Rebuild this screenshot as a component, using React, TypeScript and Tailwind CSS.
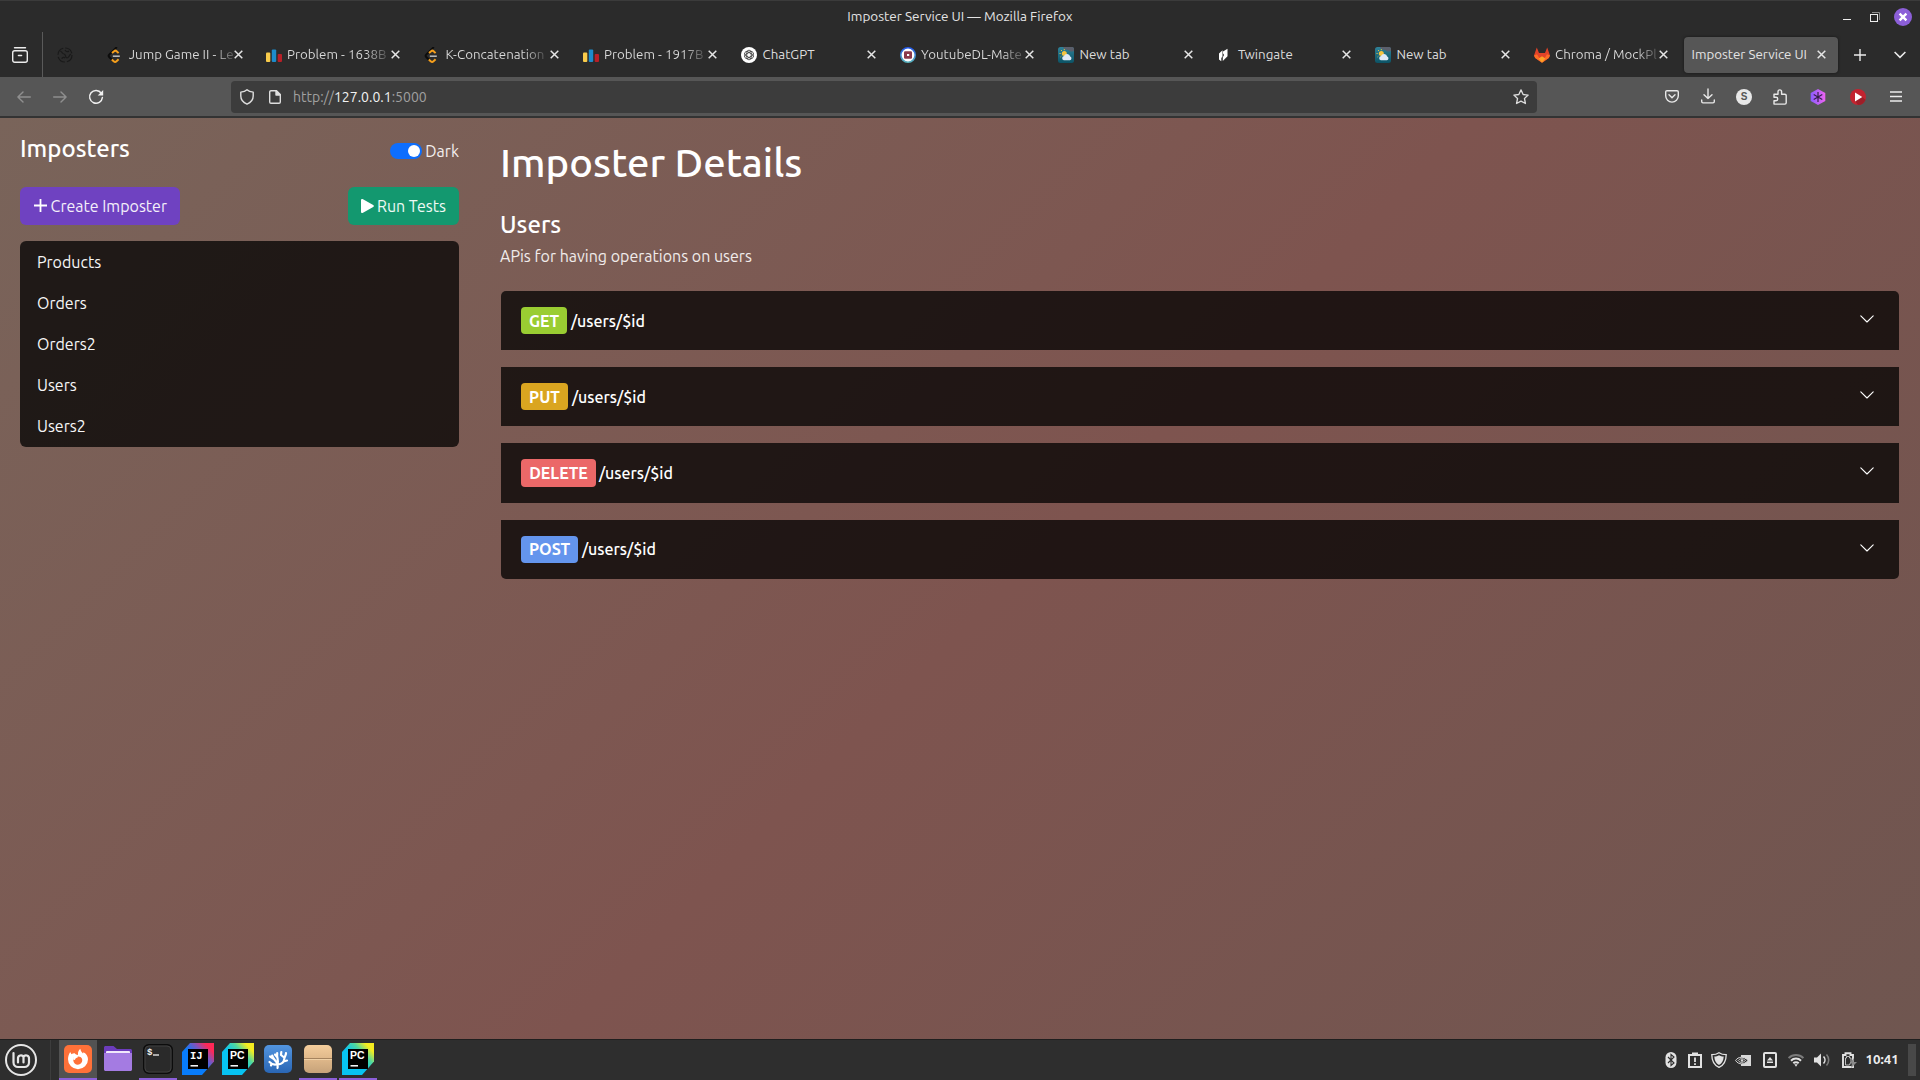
import React from 'react';

type Kids = { children?: React.ReactNode };

/* ---------- tab favicons ---------- */

const LeetCode = () => (
  <svg width="16" height="16" viewBox="0 0 16 16" fill="none" strokeWidth="2" strokeLinecap="butt" strokeLinejoin="round">
    <path d="M9.300.6 2.200 7.600c-.7.8-.7 1.700 0 2.400L5 12.700" stroke="#0c0c0c" strokeLinecap="round" />
    <path d="M5 6 7.100 4.200c.8-.7 1.700-.7 2.500 0l2 1.900" stroke="#f59f1c" />
    <path d="M4.800 12.500l1.900 1.800c.8.700 2 .7 2.800 0l2.100-2" stroke="#f59f1c" />
    <path d="M5.800 9.200h7" stroke="#b8b8b8" strokeWidth="1.600" />
  </svg>
);

const Codeforces = () => (
  <svg width="16" height="16" viewBox="0 0 16 16">
    <rect x="0" y="5.5" width="4.3" height="9.5" rx="1" fill="#f8cb4b" />
    <rect x="5.8" y="2.5" width="4.4" height="12.5" rx="1" fill="#1c8bcb" />
    <rect x="11.7" y="7" width="4.3" height="8" rx="1" fill="#b81f27" />
  </svg>
);

const ChatGPT = () => (
  <svg width="16" height="16" viewBox="0 0 16 16" fill="none">
    <circle cx="8" cy="8" r="8" fill="#fff" />
    <g stroke="#333" strokeWidth="0.8">
      <rect x="5.800" y="3.200" width="4.400" height="9.600" rx="2.200" />
      <rect x="5.800" y="3.200" width="4.400" height="9.600" rx="2.200" transform="rotate(60 8 8)" />
      <rect x="5.800" y="3.200" width="4.400" height="9.600" rx="2.200" transform="rotate(120 8 8)" />
    </g>
  </svg>
);

const YoutubeDL = () => (
  <svg width="16" height="16" viewBox="0 0 16 16">
    <defs>
      <linearGradient id="ytRing" x1="0" y1="0" x2="0" y2="1">
        <stop offset="0" stopColor="#2458e8" />
        <stop offset="1" stopColor="#58b3bd" />
      </linearGradient>
    </defs>
    <circle cx="8" cy="8" r="7.2" fill="#fff" stroke="url(#ytRing)" strokeWidth="1.6" />
    <rect x="4" y="4.2" width="8" height="7.6" rx="1.2" fill="#8c3a4c" />
    <rect x="7" y="7" width="2.2" height="2" fill="#fff" />
  </svg>
);

const Weather = () => (
  <svg width="16" height="16" viewBox="0 0 16 16">
    <defs>
      <linearGradient id="sky" x1="0" y1="0" x2="0" y2="1">
        <stop offset="0" stopColor="#2f8299" />
        <stop offset="1" stopColor="#0c5365" />
      </linearGradient>
    </defs>
    <rect width="16" height="16" rx="2.5" fill="url(#sky)" />
    <path d="M5 0h9a2 2 0 0 1 2 2v2c-3 1-4 .5-5-.5S6 3 5 0z" fill="#5b5f6b" />
    <circle cx="6.3" cy="6.600" r="2.500" fill="#f5c440" />
    <path d="M1.500 6.500h1.200M3 3l1 1M2.500 10l.8-.7M6.300 2v1.200" stroke="#f5c440" strokeWidth="0.9" />
    <path d="M5.800 13.300a2.200 2.200 0 0 1 .2-4.300 3.300 3.300 0 0 1 6.200.5 2 2 0 0 1-.3 3.800z" fill="#dfe9f7" />
  </svg>
);

const Twingate = () => (
  <svg width="16" height="16" viewBox="0 0 16 16" fill="#fff">
    <path d="M2 6.500 5.500 3.200v6.300L4.300 11v3.300L2 12.500z" />
    <path d="M6 4.500 10.500 1.800v7.500L5.800 14V10l1-1.200V6.500L6 7.300z" />
  </svg>
);

const GitLab = () => (
  <svg width="16" height="16" viewBox="0 0 16 16">
    <path d="M2.800.5 5 6h6L13.200.5 16 8.500 14.800 11 8 15.700 1.200 11 0 8.500z" fill="#e24329" />
    <path d="M0 8.500 3 7.200 8 15.700 1.200 11zM16 8.500 13 7.200 8 15.700 14.800 11z" fill="#fc6d26" />
    <path d="M4.700 11.500 8 9.300l3.300 2.200L8 15.700z" fill="#fca326" />
  </svg>
);

const CloseX = () => (
  <svg width="9" height="9" viewBox="0 0 9 9" className="shrink-0" stroke="#e6e6e6" strokeWidth="1.500">
    <path d="M.7.7l7.600 7.600M8.300.7.7 8.300" />
  </svg>
);

const fade = 'bg-linear-to-r from-[#dcdcdc] from-80% to-[#555] bg-clip-text text-transparent';

const tabs: { icon: React.ReactNode; label: string; cls: string }[] = [
  { icon: <LeetCode />, label: 'Jump Game II - Le', cls: fade },
  { icon: <Codeforces />, label: 'Problem - 1638B', cls: fade },
  { icon: <LeetCode />, label: 'K-Concatenation', cls: fade },
  { icon: <Codeforces />, label: 'Problem - 1917B', cls: fade },
  { icon: <ChatGPT />, label: 'ChatGPT', cls: '' },
  { icon: <YoutubeDL />, label: 'YoutubeDL-Mate', cls: fade },
  { icon: <Weather />, label: 'New tab', cls: '' },
  { icon: <Twingate />, label: 'Twingate', cls: '' },
  { icon: <Weather />, label: 'New tab', cls: '' },
  { icon: <GitLab />, label: 'Chroma / MockPl', cls: fade },
];

function TitleBar() {
  return (
    <div className="grid h-8 grid-cols-[1fr_auto_1fr] items-center border-t border-[#3b3b3b]">
      <span />
      <span className="text-[13.5px] leading-none text-[#e4e4e4]">Imposter Service UI — Mozilla Firefox</span>
      <div className="flex items-center justify-end pr-2">
        <svg width="8" height="12" viewBox="0 0 8 12" className="mr-[19px]">
          <path d="M0 8.500h8" stroke="#eee" />
        </svg>
        <svg width="10" height="10" viewBox="0 0 10 10" fill="none" className="mr-[14px]">
          <path d="M2 .5h7.500V8" stroke="#8e8e8e" />
          <rect x=".5" y="2.500" width="7" height="7" stroke="#eee" />
        </svg>
        <svg width="18" height="18" viewBox="0 0 18 18">
          <circle cx="9" cy="9" r="9" fill="#8c5fd8" />
          <path d="M5.600 5.600l6.800 6.800M12.400 5.600l-6.800 6.800" stroke="#fff" strokeWidth="2.400" />
        </svg>
      </div>
    </div>
  );
}

function TabStrip() {
  return (
    <div className="flex h-[45px] items-center text-[13.33px] text-[#dcdcdc]">
      <div className="flex h-full w-[43px] items-center border-r border-[#5a5a5a] pl-3">
        <svg width="16" height="16" viewBox="0 0 16 16" fill="none" stroke="#ececec" strokeWidth="1.400" strokeLinecap="round">
          <path d="M2.500.8h11" />
          <rect x=".7" y="3.700" width="14.600" height="11.600" rx="2" />
          <path d="M6.500 8.500h3" strokeWidth="1.600" />
        </svg>
      </div>
      <div className="flex w-[56px] items-center pl-[14px]">
        <svg width="16" height="16" viewBox="0 0 16 16" fill="none" stroke="#1a1a1a" strokeWidth="1.200">
          <circle cx="8" cy="8" r="7" strokeDasharray="9 2" />
          <path d="M3 4c2 0 2 3 4 3s1 4 3 4 2-3 4-4M8 3c1 2 3 2 4 1M5 12c0-2 2-2 3-1" />
        </svg>
      </div>
      {tabs.map((t, i) => (
        <div key={i} className="flex h-9 w-[158.5px] shrink-0 items-center pr-[16px] pl-[8px]">
          <span className="mr-[5.500px] shrink-0">{t.icon}</span>
          <span className={`whitespace-nowrap ${t.cls}`}>{t.label}</span>
          <span className="ml-auto">
            <CloseX />
          </span>
        </div>
      ))}
      <div className="flex h-9 w-[154px] shrink-0 items-center rounded bg-[#565656] pr-[12px] pl-[7.500px] text-[#e4e4e4] shadow-[0_0_3px_rgba(0,0,0,0.5)]">
        <span className="flex-1 whitespace-nowrap">Imposter Service UI</span>
        <CloseX />
      </div>
      <svg width="12" height="12" viewBox="0 0 12 12" className="ml-4" stroke="#ececec" strokeWidth="1.400">
        <path d="M6 0v12M0 6h12" />
      </svg>
      <svg width="12" height="8" viewBox="0 0 12 8" className="ml-[28px]" fill="none" stroke="#ececec" strokeWidth="1.500">
        <path d="M.6 1 6 6.400 11.400 1" />
      </svg>
    </div>
  );
}

const Cell = ({ children }: Kids) => <span className="flex w-9 items-center justify-center">{children}</span>;
const WideCell = ({ children }: Kids) => <span className="flex w-10 items-center justify-center">{children}</span>;

function NavBar() {
  return (
    <div className="flex h-[41px] items-center border-b-2 border-[#333] bg-[#565656] pl-1.5">
      <Cell>
        <svg width="14" height="12" viewBox="0 0 14 12" fill="none" stroke="#8f8f8f" strokeWidth="1.400" strokeLinecap="round" strokeLinejoin="round">
          <path d="M13.300 6H.9M6 .9.900 6 6 11.100" />
        </svg>
      </Cell>
      <Cell>
        <svg width="14" height="12" viewBox="0 0 14 12" fill="none" stroke="#8f8f8f" strokeWidth="1.400" strokeLinecap="round" strokeLinejoin="round">
          <path d="M.7 6h12.400M8 .9 13.100 6 8 11.100" />
        </svg>
      </Cell>
      <Cell>
        <svg width="16" height="16" viewBox="0 0 16 16" fill="none" stroke="#f0f0f0" strokeWidth="1.500" strokeLinecap="round">
          <path d="M13.300 4.200A6.400 6.400 0 1 0 14.400 8.500" />
          <path d="M15.200 1v5.500H9.700z" fill="#f0f0f0" stroke="none" />
        </svg>
      </Cell>
      <div className="ml-[117px] flex h-8 w-[1306px] items-center rounded bg-[#3c3c3c] pr-[8px] pl-[9px]">
        <svg width="14" height="16" viewBox="0 0 14 16" fill="none" stroke="#dedede" strokeWidth="1.400" strokeLinejoin="round">
          <path d="M7 .8C5.500 2.300 3 3 .8 3.100v4C.8 11 3.500 13.800 7 15.200c3.500-1.400 6.200-4.200 6.200-8.100v-4C11 3 8.500 2.300 7 .8z" />
        </svg>
        <svg width="12" height="14" viewBox="0 0 12 14" className="ml-[15px]" fill="none" stroke="#dedede" strokeWidth="1.400" strokeLinejoin="round">
          <path d="M2 .7h5.500l3.800 3.800V12a1.300 1.300 0 0 1-1.300 1.300H2A1.300 1.300 0 0 1 .7 12V2A1.300 1.300 0 0 1 2 .7z" />
          <path d="M7 .8V5h4.200z" fill="#dedede" />
        </svg>
        <span className="ml-3 text-sm text-[#a0a0a0]">
          http://<span className="text-[#f2f2f2]">127.0.0.1</span>:5000
        </span>
        <svg width="16" height="16" viewBox="0 0 16 16" className="ml-auto" fill="none" stroke="#dedede" strokeWidth="1.300" strokeLinejoin="round">
          <path d="M8 .9l2.150 4.600 5 .6-3.700 3.400 1 5L8 12.100l-4.450 2.400 1-5L.85 6.100l5-.6z" />
        </svg>
      </div>
      <div className="ml-auto flex pr-1.5">
        <Cell>
          <svg width="14" height="13" viewBox="0 0 14 13" fill="none" stroke="#e8e8e8" strokeWidth="1.400" strokeLinecap="round" strokeLinejoin="round">
            <path d="M2 .7h10A1.300 1.300 0 0 1 13.300 2v3.800a6.300 6.300 0 0 1-12.600 0V2A1.300 1.300 0 0 1 2 .7z" />
            <path d="M4 4.800l3 2.900 3-2.900" />
          </svg>
        </Cell>
        <Cell>
          <svg width="14" height="16" viewBox="0 0 14 16" className="-mt-px -ml-px" fill="none" stroke="#e8e8e8" strokeWidth="1.400" strokeLinecap="round" strokeLinejoin="round">
            <path d="M7 1v9.500M3 6.700l4 3.900 4-3.900M.7 12v1.600a1.300 1.300 0 0 0 1.300 1.300h10a1.300 1.300 0 0 0 1.300-1.300V12" />
          </svg>
        </Cell>
        <Cell>
          <span className="flex size-4 items-center justify-center rounded-full bg-[#e8e8e8] font-['Liberation_Sans'] text-[10px] leading-none font-bold text-[#555]">
            S
          </span>
        </Cell>
        <Cell>
          <svg width="14" height="16" viewBox="0 0 14 16" fill="none" stroke="#e8e8e8" strokeWidth="1.400" strokeLinejoin="round">
            <path d="M1 8.300V5.200h4V2.700a1.800 1.800 0 0 1 3.600 0v2.500h3.300a1.300 1.300 0 0 1 1.300 1.300v7.300a1.300 1.300 0 0 1-1.300 1.300H1v-3.300h2a1.700 1.700 0 0 0 0-3.500z" />
          </svg>
        </Cell>
        <WideCell>
          <svg width="16" height="16" viewBox="0 0 16 16">
            <defs>
              <linearGradient id="hex" x1="0" y1="0" x2="1" y2="0">
                <stop offset="0" stopColor="#8a5cff" />
                <stop offset="1" stopColor="#ee63f0" />
              </linearGradient>
            </defs>
            <path d="M8 0l7.300 4v8L8 16 .7 12V4z" fill="url(#hex)" />
            <path d="M8 3v10M3.700 5.500l8.600 5M12.300 5.500l-8.600 5" stroke="#34204a" strokeWidth="1.200" />
          </svg>
        </WideCell>
        <WideCell>
          <svg width="16" height="16" viewBox="0 0 16 16">
            <circle cx="8" cy="8" r="8" fill="#c32430" />
            <path d="M8 16a8 8 0 0 0 7.500-5.200L11 7 5 12z" fill="#9e1e28" />
            <path d="M5 3.600 12.300 8 5 12.400z" fill="#fff" />
          </svg>
        </WideCell>
        <Cell>
          <svg width="12" height="11" viewBox="0 0 12 11" stroke="#ececec" strokeWidth="1.300">
            <path d="M0 1h12M0 5.500h12M0 10h12" />
          </svg>
        </Cell>
      </div>
    </div>
  );
}

/* ---------- page ---------- */

const imposters = ['Products', 'Orders', 'Orders2', 'Users', 'Users2'];

const endpoints = [
  { method: 'GET', box: 'h-[27px] w-[46px] bg-[#9acd32]', row: 'h-[59px] rounded-t-[5px]', path: 'leading-[29px]' },
  { method: 'PUT', box: 'h-[27px] w-[47px] bg-[#daa520]', row: 'h-[59px]', path: 'leading-[29px]' },
  { method: 'DELETE', box: 'h-[28px] w-[75px] -mr-px bg-[#eb6868]', row: 'h-[60px]', path: 'leading-[29px]' },
  { method: 'POST', box: 'h-[27px] w-[57px] bg-[#6495ed] pb-px', row: 'h-[59px] rounded-b-[5px]', path: 'leading-[27px]' },
];

function Sidebar() {
  return (
    <aside className="w-[439px] shrink-0">
      <div className="flex h-[69px] items-start justify-between">
        <h4 className="mt-4 text-2xl leading-[29px] font-medium text-white">Imposters</h4>
        <label className="mt-[21px] flex items-center gap-[3.500px] text-base leading-6 text-[#f4efee]">
          <span className="flex h-4 w-8 items-center justify-end rounded-full bg-[#0d6efd] pr-0.5">
            <span className="size-3 rounded-full bg-white" />
          </span>
          Dark
        </label>
      </div>
      <div className="flex justify-between">
        <button className="flex h-[38px] w-40 items-center justify-end rounded-md bg-[#6f42c1] pr-[13px] text-base whitespace-nowrap text-[#f4f0fa]">
          <svg width="13" height="13" viewBox="0 0 13 13" className="mr-1 mb-0.5 shrink-0" stroke="#fff" strokeWidth="1.800">
            <path d="M6.500 0v13M0 6.500h13" />
          </svg>
          Create Imposter
        </button>
        <button className="flex h-[38px] w-[111px] items-center justify-end rounded-md bg-[#13986f] pr-[13px] text-base whitespace-nowrap text-[#eefaf5]">
          <svg width="13" height="14" viewBox="0 0 13 14" className="mr-[3px] shrink-0" fill="#fff">
            <path d="M0 1.300C0 .2 1 -.3 2 .3l10.200 5.800c.9.500.9 1.300 0 1.800L2 13.700c-1 .6-2 .1-2-1z" />
          </svg>
          Run Tests
        </button>
      </div>
      <ul className="mt-4 overflow-hidden rounded-md bg-black/74">
        {imposters.map((n) => (
          <li key={n} className="h-[41px] px-[17px] text-base leading-[42px] text-[#f6f6f6] last:h-[42px]">
            {n}
          </li>
        ))}
      </ul>
    </aside>
  );
}

function Details() {
  return (
    <main className="ml-[41px] w-[1399px]">
      <h1 className="mt-[21px] text-[40px] leading-[48px] font-medium text-white">Imposter Details</h1>
      <h4 className="mt-[23px] text-2xl leading-[29px] font-medium text-white">Users</h4>
      <p className="mt-[5px] text-base leading-6 text-[#f1eceb]">APis for having operations on users</p>
      <div className="mt-[23px] ml-px flex flex-col gap-[17px]">
        {endpoints.map((e) => (
          <div key={e.method} className={`flex items-start bg-black/74 pt-4 pr-[25px] pl-5 ${e.row}`}>
            <span className={`flex items-center justify-center rounded text-base leading-none font-bold text-white ${e.box}`}>
              {e.method}
            </span>
            <span className={`ml-1 text-base font-medium text-white ${e.path}`}>/users/$id</span>
            <svg width="14" height="8" viewBox="0 0 14 8" className="mt-2 ml-auto" fill="none" stroke="#fff" strokeWidth="1.100" strokeLinecap="round" strokeLinejoin="round">
              <path d="M.8.8 7 7 13.200.8" />
            </svg>
          </div>
        ))}
      </div>
    </main>
  );
}

/* ---------- taskbar ---------- */

const JetBrains = ({ id, text, font, a, b, c }: { id: string; text: string; font: string; a: string; b: string; c: string }) => (
  <svg width="32" height="32" viewBox="0 0 32 32">
    <defs>
      <linearGradient id={id} x1="0.15" y1="0.75" x2="0.9" y2="0.05">
        <stop offset="0.35" stopColor={a} />
        <stop offset="0.65" stopColor={b} />
        <stop offset="0.9" stopColor={c} />
      </linearGradient>
    </defs>
    <path d="M8 0h24v18.500L20 32H0V9z" fill={`url(#${id})`} />
    <rect x="6" y="6" width="20" height="20" fill="#000" />
    <text x="8" y="16" fill="#fff" fontFamily={font} fontWeight="700" fontSize="10.500">
      {text}
    </text>
    <path d="M8.500 22.800h7.500" stroke="#fff" strokeWidth="1.500" />
  </svg>
);

const mono = "'Liberation Mono', monospace";
const sans = "'Liberation Sans', sans-serif";

const FirefoxIcon = () => (
  <svg width="28" height="28" viewBox="0 0 28 28">
    <rect width="28" height="28" rx="5" fill="#ff7139" />
    <path d="M14 24.300A10 10 0 0 1 4 14.300c0-3 1-5.300 2.200-7.300l1.300 2.300c1-.9 2-1.200 3.200-1.100.8 1.300 1.900 1.500 3.300 1.700-.3-2.600.5-4.700 2.300-6.200.3 2.300 1.500 3.300 2.700 4.800l.5-1.200c2.900 1.600 4.500 4.100 4.500 7a10 10 0 0 1-10 10z" fill="#fff" />
    <path d="M10 11.600c1.600.4 2.400-.4 4-.1 1.700-.1 4.300 1 4.300 3.600a4.500 4.500 0 0 1-9 .2c-.1-1.400.2-2.600.7-3.700z" fill="#ff7139" />
    <path d="M9.500 10.500c2 0 3.500-.3 4.500 1.200-.4 1.100-1.600 1-2.400 1.700-.4.400-.6 1-.6 1.500l-2-.5z" fill="#fff" />
  </svg>
);

const FolderIcon = () => (
  <svg width="28" height="26" viewBox="0 0 28 26">
    <path d="M0 1.500C0 .7.700 0 1.500 0h8l3.500 3h13.500c.8 0 1.500.7 1.500 1.500V10H0z" fill="#6c3cbc" />
    <rect x="2" y="5" width="24" height="4" rx="1" fill="#f0e8fb" />
    <path d="M0 7h28v16.500c0 .8-.7 1.500-1.500 1.500h-25C.7 25 0 24.300 0 23.500z" fill="#a47be2" />
  </svg>
);

const TerminalIcon = () => (
  <svg width="30" height="30" viewBox="0 0 30 30">
    <rect x=".7" y=".7" width="28.600" height="28.600" rx="5" fill="#2a2a2a" stroke="#0c0c0c" strokeWidth="1.400" />
    <rect x="2" y="2" width="26" height="26" rx="4" fill="none" stroke="#454545" strokeWidth=".8" />
    <text x="4" y="10.500" fill="#f2f2f2" fontFamily={mono} fontSize="9" fontWeight="700">$</text>
    <path d="M10 11h6" stroke="#f2f2f2" strokeWidth="1.300" />
  </svg>
);

const CoralIcon = () => (
  <svg width="28" height="28" viewBox="0 0 28 28">
    <defs>
      <linearGradient id="coral" x1="0" y1="0" x2="0" y2="1">
        <stop offset="0" stopColor="#5295e0" />
        <stop offset="1" stopColor="#2a66b4" />
      </linearGradient>
    </defs>
    <rect width="28" height="28" rx="5" fill="url(#coral)" />
    <g fill="none" stroke="#fff" strokeWidth="2.200" strokeLinecap="round" strokeLinejoin="round">
      <path d="M13.500 23c.5-1.500 0-2.500-.3-3.800C10.500 20 7.500 19 5.500 17M13.200 19c-.5-3-4-4-5-8.500M9.200 13.500 6 11.500M13.500 18.500c1.500-2.500-1-6-.3-10.500M13 12l-2-2.500M14 19.500c4-.5 6-2 6.200-5.500.2-2.500 2-4 1.800-6M20.200 12.500 17 10l.3-3M19.500 16.500l3.500-1M7.500 18.500 7 20.500" />
    </g>
  </svg>
);

const BoxIcon = () => (
  <svg width="28" height="28" viewBox="0 0 28 28">
    <defs>
      <linearGradient id="box" x1="0" y1="0" x2="0" y2="1">
        <stop offset="0" stopColor="#f3cd9c" />
        <stop offset="0.5" stopColor="#dfb88a" />
        <stop offset="1" stopColor="#c6a27a" />
      </linearGradient>
    </defs>
    <rect width="28" height="28" rx="5" fill="url(#box)" />
    <path d="M0 13.500h28" stroke="#a5835e" />
    <path d="M0 14.500h28" stroke="#efd0a6" />
  </svg>
);

const launchers: { icon: React.ReactNode; cls: string }[] = [
  { icon: <FirefoxIcon />, cls: 'bg-[#525252] border-[#8c5fd8]' },
  { icon: <FolderIcon />, cls: 'border-transparent' },
  { icon: <TerminalIcon />, cls: 'border-[#8c5fd8]' },
  { icon: <JetBrains id="ij" text="IJ" font={mono} a="#087cfa" b="#7b55c0" c="#fe2857" />, cls: 'border-transparent' },
  { icon: <JetBrains id="pc1" text="PC" font={sans} a="#07c3f2" b="#4fd8a0" c="#f5ec20" />, cls: 'border-transparent' },
  { icon: <CoralIcon />, cls: 'border-transparent' },
  { icon: <BoxIcon />, cls: 'border-[#8c5fd8]' },
  { icon: <JetBrains id="pc2" text="PC" font={sans} a="#07c3f2" b="#4fd8a0" c="#f5ec20" />, cls: 'border-[#8c5fd8]' },
];

const TrayCell = ({ children }: Kids) => <span className="flex w-[26px] items-center justify-center">{children}</span>;
const TrayCellNarrow = ({ children }: Kids) => <span className="flex w-6 items-center justify-center">{children}</span>;

function Taskbar() {
  return (
    <footer className="flex h-[41px] border-t border-[#1f1f1f] bg-[#2e2e2e]">
      <div className="flex w-[51px] items-center border-r border-[#3d3d3d] pl-[5px]">
        <svg width="32" height="32" viewBox="0 0 32 32" fill="none" stroke="#e6e6e6">
          <circle cx="16" cy="16" r="15" strokeWidth="2" />
          <path d="M8.500 9v9.500a4.500 4.500 0 0 0 4.500 4.500h6.500a4.500 4.500 0 0 0 4.500-4.500v-4a2.900 2.900 0 0 0-5.500-1.500 2.900 2.900 0 0 0-5.500 1.500v4M18.500 13.500v5" strokeWidth="2.200" strokeLinecap="round" />
        </svg>
      </div>
      <div className="ml-2 flex gap-0.5">
        {launchers.map((l, i) => (
          <span key={i} className={`flex h-10 w-[38px] items-center justify-center border-b-2 ${l.cls}`}>
            {l.icon}
          </span>
        ))}
      </div>
      <div className="ml-auto flex items-center">
        <TrayCellNarrow>
          <svg width="12" height="16" viewBox="0 0 12 16">
            <rect x=".5" width="11" height="16" rx="5.500" fill="#e2e2e2" />
            <path d="M3 5l6 6-3 2.500v-11L9 5l-6 6" fill="none" stroke="#2e2e2e" strokeWidth="1.100" />
          </svg>
        </TrayCellNarrow>
        <TrayCellNarrow>
          <svg width="14" height="16" viewBox="0 0 14 16" fill="none">
            <rect x="1" y="3" width="12" height="12" stroke="#e2e2e2" strokeWidth="2" />
            <path d="M4 .5h6v3.500H4z" fill="#e2e2e2" />
            <path d="M7 5.500v4.500M7 11.300v1.700" stroke="#e2e2e2" strokeWidth="1.800" />
          </svg>
        </TrayCellNarrow>
        <TrayCellNarrow>
          <svg width="16" height="16" viewBox="0 0 16 16" fill="none">
            <path d="M8 .7c2 1.400 4.500 2 7.200 2 0 6-2 10.300-7.200 12.700C2.800 13 .8 8.700.8 2.700c2.700 0 5.200-.6 7.200-2z" stroke="#e2e2e2" strokeWidth="1.300" />
            <path d="M8 3.300c1.300.8 3 1.200 4.700 1.300-.2 3.900-1.500 6.700-4.700 8.500-3.200-1.800-4.500-4.600-4.700-8.500 1.700-.1 3.400-.5 4.700-1.300z" fill="#e2e2e2" />
          </svg>
        </TrayCellNarrow>
        <TrayCell>
          <svg width="16" height="11" viewBox="0 0 16 11" className="-ml-0.5" fill="none">
            <path d="M6 0h10v11H6z" fill="#d8d8d8" />
            <path d="M.6 5.500C3 1.500 9 .8 13 5.500 9.500 10 3.500 10 .6 5.500z" fill="#2e2e2e" stroke="#d8d8d8" />
            <path d="M3.200 5.500C5 3.200 8 3 10.500 5.500 8 8 5 8 3.200 5.500z" stroke="#d8d8d8" />
            <circle cx="7" cy="5.500" r="1.200" fill="#d8d8d8" />
          </svg>
        </TrayCell>
        <TrayCell>
          <svg width="14" height="16" viewBox="0 0 14 16">
            <rect x="1" y="1" width="12" height="14" rx="1" fill="none" stroke="#e2e2e2" strokeWidth="2" />
            <path d="M4 8.500 7 5l3 3.500zM4 9.500h6V11H4z" fill="#e2e2e2" />
          </svg>
        </TrayCell>
        <TrayCell>
          <svg width="16" height="14" viewBox="0 0 16 14" fill="none" strokeWidth="2">
            <path d="M.6 5a10.500 10.500 0 0 1 14.800 0" stroke="#7b7b7b" />
            <path d="M3 7.700a7 7 0 0 1 10 0M5.300 10.300a3.800 3.800 0 0 1 5.400 0" stroke="#e2e2e2" />
            <path d="M6.300 11.300h3.400L8 13.800z" fill="#e2e2e2" />
          </svg>
        </TrayCell>
        <TrayCell>
          <svg width="16" height="14" viewBox="0 0 16 14" fill="none">
            <path d="M0 4.500h3L7 .5v13l-4-4H0z" fill="#e2e2e2" />
            <path d="M9.500 3.500a5 5 0 0 1 0 7" stroke="#e2e2e2" strokeWidth="1.600" />
            <path d="M12.500 1.500a8 8 0 0 1 0 11" stroke="#7b7b7b" strokeWidth="1.600" />
          </svg>
        </TrayCell>
        <TrayCell>
          <svg width="15" height="16" viewBox="0 0 15 16" className="ml-0.5" fill="none">
            <path d="M3.500 1.300h5V3H11v12H1V3h2.500z" stroke="#e2e2e2" strokeWidth="1.900" />
            <path d="M4.500 4.500h3V6H9v3.500L7.500 13H3.500V6h1z" stroke="#e2e2e2" strokeWidth=".8" />
            <path d="M12 6 7.500 11.500H10L9 16l6-6h-3.200z" fill="#8a8a8a" />
          </svg>
        </TrayCell>
        <span className="ml-[4.500px] w-[42.500px] text-[13.33px] leading-none font-bold whitespace-nowrap text-[#ececec]">10:41</span>
        <span className="mr-1 h-8 w-2 bg-[#484848]" />
      </div>
    </footer>
  );
}

export default function App() {
  return (
    <div className="flex h-[1080px] w-[1920px] flex-col overflow-hidden bg-[#2b2b2b] font-[Ubuntu,'Noto_Sans',sans-serif]">
      <TitleBar />
      <TabStrip />
      <NavBar />
      <div className="flex flex-1 bg-[linear-gradient(135deg,#79645a_0%,#7e544f_52%,#6f5650_100%)] pl-5">
        <Sidebar />
        <Details />
      </div>
      <Taskbar />
    </div>
  );
}
